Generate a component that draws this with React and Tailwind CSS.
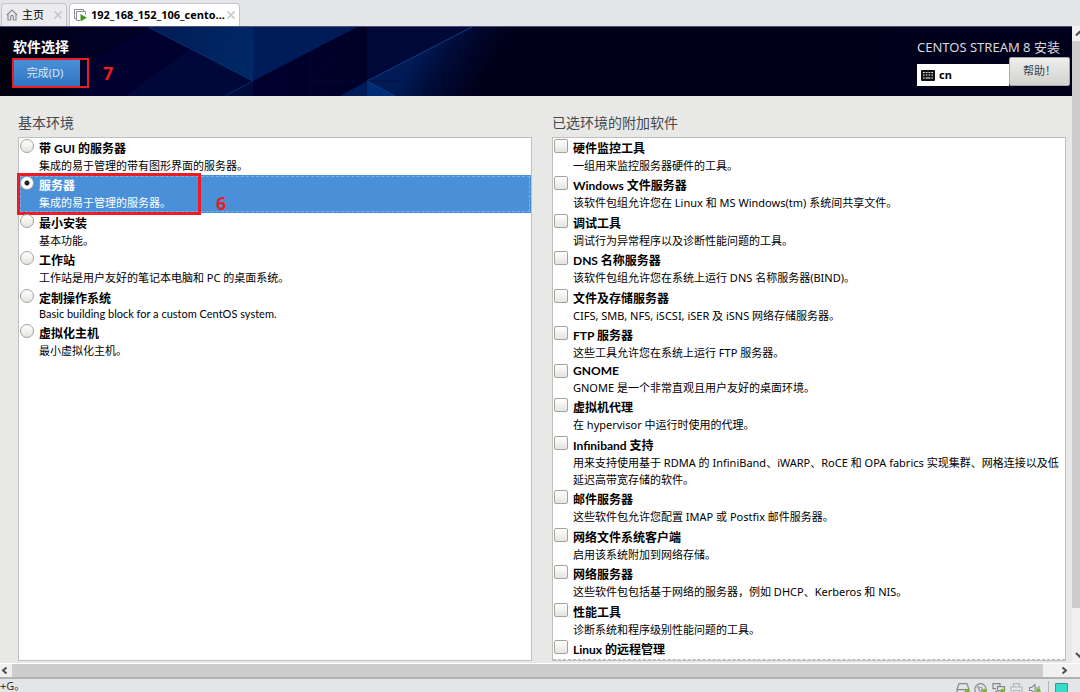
import React, { useState } from 'react'

const environments = [
    { id: 'gui', name: '带 GUI 的服务器', desc: '集成的易于管理的带有图形界面的服务器。' },
    { id: 'server', name: '服务器', desc: '集成的易于管理的服务器。' },
    { id: 'minimal', name: '最小安装', desc: '基本功能。' },
    { id: 'workstation', name: '工作站', desc: '工作站是用户友好的笔记本电脑和 PC 的桌面系统。' },
    { id: 'custom', name: '定制操作系统', desc: 'Basic building block for a custom CentOS system.', latinDesc: true },
    { id: 'virt', name: '虚拟化主机', desc: '最小虚拟化主机。' },
]

const addons = [
    { id: 'hw', name: '硬件监控工具', desc: '一组用来监控服务器硬件的工具。' },
    { id: 'smb', name: 'Windows 文件服务器', desc: '该软件包组允许您在 Linux 和 MS Windows(tm) 系统间共享文件。' },
    { id: 'debug', name: '调试工具', desc: '调试行为异常程序以及诊断性能问题的工具。' },
    { id: 'dns', name: 'DNS 名称服务器', desc: '该软件包组允许您在系统上运行 DNS 名称服务器(BIND)。' },
    { id: 'file', name: '文件及存储服务器', desc: 'CIFS, SMB, NFS, iSCSI, iSER 及 iSNS 网络存储服务器。' },
    { id: 'ftp', name: 'FTP 服务器', desc: '这些工具允许您在系统上运行 FTP 服务器。' },
    { id: 'gnome', name: 'GNOME', desc: 'GNOME 是一个非常直观且用户友好的桌面环境。', latinName: true },
    { id: 'agents', name: '虚拟机代理', desc: '在 hypervisor 中运行时使用的代理。' },
    { id: 'ib', name: 'Infiniband 支持', desc: '用来支持使用基于 RDMA 的 InfiniBand、iWARP、RoCE 和 OPA fabrics 实现集群、网格连接以及低延迟高带宽存储的软件。' },
    { id: 'mail', name: '邮件服务器', desc: '这些软件包允许您配置 IMAP 或 Postfix 邮件服务器。' },
    { id: 'nfs', name: '网络文件系统客户端', desc: '启用该系统附加到网络存储。' },
    { id: 'net', name: '网络服务器', desc: '这些软件包包括基于网络的服务器，例如 DHCP、Kerberos 和 NIS。' },
    { id: 'perf', name: '性能工具', desc: '诊断系统和程序级别性能问题的工具。' },
    { id: 'remote', name: 'Linux 的远程管理', desc: '' },
]

const HomeIcon = () => (
    <svg width="12" height="12" viewBox="0 0 12 12" fill="none" stroke="#8a8d90" strokeWidth="1.2">
        <path d="M0.8 6 6 1l5.2 5M2 5.5V11h2.6V7.8a1.4 1.4 0 0 1 2.8 0V11H10V5.5" />
    </svg>
)

const VmIcon = () => (
    <svg width="13" height="13" viewBox="0 0 13 13" fill="none" stroke="#8a8d90">
        <path d="M2.5 9.500H.5V.5h9v2" />
        <path d="M6 11.500H2.500V2.500h9v3" />
        <path d="M6.500 5 12.800 8.800 6.500 12.600z" fill="#3a9a1c" stroke="none" />
    </svg>
)

const CloseIcon = () => (
    <svg width="8" height="8" viewBox="0 0 8 8" stroke="#c2c4c6" strokeWidth="1.5">
        <path d="M.5.5l7 7M7.500.5l-7 7" />
    </svg>
)

const KeyboardIcon = () => (
    <svg width="14" height="11" viewBox="0 0 14 11">
        <rect width="14" height="11" rx="1" fill="#111" />
        <path d="M2 2.500h10M2 5h10" stroke="#fff" strokeWidth="1.2" strokeDasharray="1.600 1.200" />
        <path d="M2 8h1.500M4.500 8h5M10.500 8H12" stroke="#fff" strokeWidth="1.2" />
    </svg>
)

const HeaderArt = () => (
    <svg className="absolute inset-0 h-full w-full" viewBox="0 0 1072 69" preserveAspectRatio="xMinYMin slice">
        <defs>
            <linearGradient id="base" x1="0" x2="1">
                <stop offset="0" stopColor="#000010" />
                <stop offset="0.08" stopColor="#000022" />
                <stop offset="0.24" stopColor="#00002e" />
                <stop offset="0.5" stopColor="#00001a" />
                <stop offset="1" stopColor="#00001c" />
            </linearGradient>
            <linearGradient id="beam" gradientUnits="userSpaceOnUse" x1="148" y1="0" x2="253" y2="20">
                <stop offset="0" stopColor="#001c54" />
                <stop offset="1" stopColor="#002866" />
            </linearGradient>
            <linearGradient id="fade" gradientUnits="userSpaceOnUse" x1="415" y1="30" x2="475" y2="64">
                <stop offset="0" stopColor="#001a55" />
                <stop offset="0.4" stopColor="#000c38" />
                <stop offset="1" stopColor="#00001a" />
            </linearGradient>
        </defs>
        <rect width="1072" height="69" fill="url(#base)" />
        <path d="M82 69V40L148 0 253 54 225 69z" fill="#00002e" />
        <path d="M125 69 190 22 253 54 225 69z" fill="#00083a" />
        <path d="M148 0H253V54z" fill="url(#beam)" />
        <path d="M253 0H357L253 54z" fill="#001c58" />
        <path d="M225 69 253 54V69z" fill="#000a3c" />
        <path d="M367 0H472L367 54z" fill="#000838" />
        <path d="M472 0H545V69H395L367 54z" fill="url(#fade)" />
        <path d="M340 69 367 54V69z" fill="#001c58" />
        <path d="M367 54 395 69H367z" fill="#002c74" />
        <path d="M148 0 253 54 225 69" fill="none" stroke="#06387a" strokeWidth="0.8" />
        <path d="M472 0 367 54 395 69" fill="none" stroke="#0c3f8a" />
        <path d="M310 54H400M310 28V69M310 54 350 10M310 54 324 69" fill="none" stroke="#040c40" strokeWidth="0.6" />
    </svg>
)

const TrayIcons = () => (
    <div className="flex items-start gap-1 pt-1">
        <svg width="14" height="12" viewBox="0 0 14 12" fill="none" stroke="#85898c" strokeWidth="1.2">
            <path d="M3 .6h8l2 6v5H1v-5zM1 6.600h12" />
            <circle cx="11" cy="8" r="2.200" fill="#76b82a" stroke="none" />
        </svg>
        <svg width="14" height="12" viewBox="0 0 14 12" fill="none" stroke="#85898c" strokeWidth="1.1">
            <circle cx="6.500" cy="6.300" r="5.700" />
            <circle cx="6.500" cy="6.300" r="1.800" />
            <path d="M3 5a4 4 0 0 1 2-2M10 7.500a4 4 0 0 1-2 2" />
            <circle cx="10.500" cy="8" r="2.200" fill="#76b82a" stroke="none" />
        </svg>
        <svg width="14" height="12" viewBox="0 0 14 12" fill="none" stroke="#85898c" strokeWidth="1.2">
            <path d="M8 3V.6H1v5h3M3 8.500h2M5.500 3.600h7v4h-7z" />
            <circle cx="10.500" cy="8" r="2.200" fill="#76b82a" stroke="none" />
        </svg>
        <svg width="14" height="12" viewBox="0 0 14 12" fill="none" stroke="#b4b7ba" strokeWidth="1.2">
            <path d="M3.500 4V.6h6V4M3 9.500H1V4h11v5.500h-2M3.500 7.500h6v4h-6z" />
        </svg>
        <svg width="14" height="12" viewBox="0 0 14 12" fill="none" stroke="#85898c" strokeWidth="1.1">
            <path d="M1.500 4.500h2L7 1.500v9L3.500 7.500h-2zM9 4v4M11 3v6" />
            <circle cx="10.500" cy="8" r="2.200" fill="#76b82a" stroke="none" />
        </svg>
    </div>
)

const OptionRow = ({ item, type, group, checked, onChange }) => (
    <li className={`relative even:pb-px ${checked && type === 'radio' ? 'bg-[#4a90d9] text-white outline-1 -outline-offset-2 outline-dashed outline-[#7db0e6]' : ''}`}>
        <label className="flex gap-1 pl-px">
            <input
                type={type}
                name={group}
                checked={checked}
                onChange={onChange}
                className={`mt-px mr-px h-[14px] w-[14px] shrink-0 appearance-none border border-[#a2a29e] bg-linear-to-b from-white to-[#e4e4e2] ${
                    type === 'radio'
                        ? 'rounded-full checked:bg-[radial-gradient(circle,#222_0_2px,#fff_3px)]'
                        : 'rounded-xs checked:bg-[#4a90d9]'
                }`}
            />
            <span className="min-w-0">
                <span className={`block text-[12px] font-bold font-['Lato','Noto_Sans_CJK_SC',sans-serif] ${item.latinName ? 'leading-[16px]' : 'pt-0.5 leading-[17px]'}`}>
                    {item.name}
                </span>
                <span
                    className={`block text-[11px] ${
                        item.latinDesc ? "pb-0.5 leading-[14px] font-['Lato',sans-serif]" : 'pb-px leading-[17px]'
                    }`}
                >
                    {item.desc}
                </span>
            </span>
        </label>
        {checked && type === 'radio' && (
            <>
                <span className="absolute -inset-y-0.5 -left-0.5 w-[184px] border-3 border-[#ed1c24]" />
                <span className="absolute top-4 left-[197px] text-lg/6 font-bold text-[#ed1c24] font-['Open_Sans',sans-serif]">6</span>
            </>
        )}
    </li>
)

const App = () => {
    const [environment, setEnvironment] = useState('server')
    const [selected, setSelected] = useState([])

    const toggleAddon = (id) => {
        setSelected((prev) => (prev.includes(id) ? prev.filter((x) => x !== id) : [...prev, id]))
    }

    return (
        <div className="flex h-screen flex-col overflow-hidden bg-[#e3e5e8] text-black font-['Noto_Sans','Noto_Sans_CJK_SC',sans-serif]">
            <nav className="flex h-[26px] shrink-0 items-end gap-0.5 pl-px">
                <div className="flex h-[23px] items-center rounded-t-sm border border-b-0 border-[#c3c5c8] bg-[#ececee] px-1">
                    <button className="flex items-center gap-1 text-[11px]">
                        <HomeIcon />
                        主页
                    </button>
                    <button className="ml-2.5" aria-label="关闭主页">
                        <CloseIcon />
                    </button>
                </div>
                <div className="flex h-[23px] items-center rounded-t-sm border border-b-0 border-[#c3c5c8] bg-white px-1">
                    <button className="flex items-center gap-1 text-[11px] font-bold font-['Open_Sans',sans-serif]">
                        <VmIcon />
                        192_168_152_106_cento...
                    </button>
                    <button className="ml-0.5" aria-label="关闭标签">
                        <CloseIcon />
                    </button>
                </div>
            </nav>

            <div className="flex min-h-0 flex-1">
                <div className="flex min-w-0 flex-1 flex-col bg-[#e8e8e6]">
                    <header className="relative h-[70px] shrink-0 overflow-hidden border-t border-[#50507a] bg-[#00001c]">
                        <HeaderArt />
                        <div className="relative flex justify-between pl-3">
                            <div className="pt-2.5">
                                <h1 className="pb-px pl-px text-[14px]/5 font-bold text-white">软件选择</h1>
                                <div className="flex items-center gap-3.5">
                                    <div className="w-[77px] border-2 border-[#ed1c24]">
                                        <button className="block h-[26px] w-[66px] bg-linear-to-b from-[#4a90d9] to-[#2f74c0] pr-1 text-[11px] text-[#dce9f7]">
                                            完成(D)
                                        </button>
                                    </div>
                                    <span className="text-lg/6 font-bold text-[#ed1c24] font-['Open_Sans',sans-serif]">7</span>
                                </div>
                            </div>
                            <div className="pt-2.5 pr-0.5">
                                <p className="text-[13px]/5 text-[#d9d9dc]">CENTOS STREAM 8 安装</p>
                                <div className="flex items-end">
                                    <button className="flex h-[22px] w-[92px] items-center gap-1 bg-white pl-1 text-[11px] font-bold">
                                        <KeyboardIcon />
                                        cn
                                    </button>
                                    <button className="h-[29px] w-[61px] rounded-xs border border-[#a9a9a5] bg-linear-to-b from-[#eeeeec] to-[#d2d2cf] text-[11px] text-[#3c4346]">
                                        帮助！
                                    </button>
                                </div>
                            </div>
                        </div>
                    </header>

                    <main className="grid min-h-0 flex-1 grid-cols-2 gap-5 pt-[17px] pr-1.5 pb-0.5 pl-[18px]">
                        <section className="flex min-h-0 flex-col">
                            <h2 className="pb-1 text-[14px]/5 text-[#444b4e]">基本环境</h2>
                            <ul className="min-h-0 flex-1 border border-[#bfbfbc] bg-white">
                                {environments.map((item) => (
                                    <OptionRow
                                        key={item.id}
                                        item={item}
                                        type="radio"
                                        group="environment"
                                        checked={environment === item.id}
                                        onChange={() => setEnvironment(item.id)}
                                    />
                                ))}
                            </ul>
                        </section>
                        <section className="flex min-h-0 flex-col">
                            <h2 className="pb-1 text-[14px]/5 text-[#444b4e]">已选环境的附加软件</h2>
                            <div className="flex min-h-0 flex-1 flex-col border border-[#bfbfbc] bg-white">
                                <ul className="min-h-0 flex-1 overflow-hidden border-b border-dashed border-[#bbb]">
                                    {addons.map((item) => (
                                        <OptionRow
                                            key={item.id}
                                            item={item}
                                            type="checkbox"
                                            group="addons"
                                            checked={selected.includes(item.id)}
                                            onChange={() => toggleAddon(item.id)}
                                        />
                                    ))}
                                </ul>
                            </div>
                        </section>
                    </main>
                </div>
                <div className="flex w-2 shrink-0 flex-col bg-[#f0f0f0]">
                    <svg width="8" height="15" viewBox="0 0 8 15" fill="none" stroke="#505050" strokeWidth="2">
                        <path d="M4 9.500 7.500 6 11 9.500" />
                    </svg>
                    <div className="mb-10 flex-1 bg-[#cdcdcd]" />
                    <svg width="8" height="15" viewBox="0 0 8 15" fill="none" stroke="#505050" strokeWidth="2">
                        <path d="M4 5 7.500 8.500 11 5" />
                    </svg>
                </div>
            </div>

            <div className="flex h-4 shrink-0 items-center border-t border-b-2 border-t-white border-b-[#b0b2b5] bg-[#f0f0f0]">
                <svg width="12" height="13" viewBox="0 0 12 13" fill="none" stroke="#505050" strokeWidth="2">
                    <path d="M6.500 3.500 3 6.500l3.500 3" />
                </svg>
                <div className="mr-[17px] h-full flex-1 bg-[#cdcdcd]" />
                <svg width="20" height="13" viewBox="0 0 20 13" fill="none" stroke="#505050" strokeWidth="2">
                    <path d="M2.500 3.500 6 6.500l-3.500 3" />
                </svg>
            </div>

            <footer className="flex h-[13px] shrink-0 items-start justify-between overflow-hidden">
                <span className="text-[11px] leading-[13px] text-[#333]">+G。</span>
                <div className="flex items-start">
                    <TrayIcons />
                    <span className="mt-0.5 ml-1.5 h-4 w-px bg-[#b4b6b9]" />
                    <svg className="mt-1 mr-3 ml-1.5" width="13" height="13" viewBox="0 0 13 13">
                        <path d="M.5.5h12v8l-4 4h-8z" fill="#35dcc8" stroke="#4d8f8a" />
                    </svg>
                </div>
            </footer>
        </div>
    )
}

export default App
